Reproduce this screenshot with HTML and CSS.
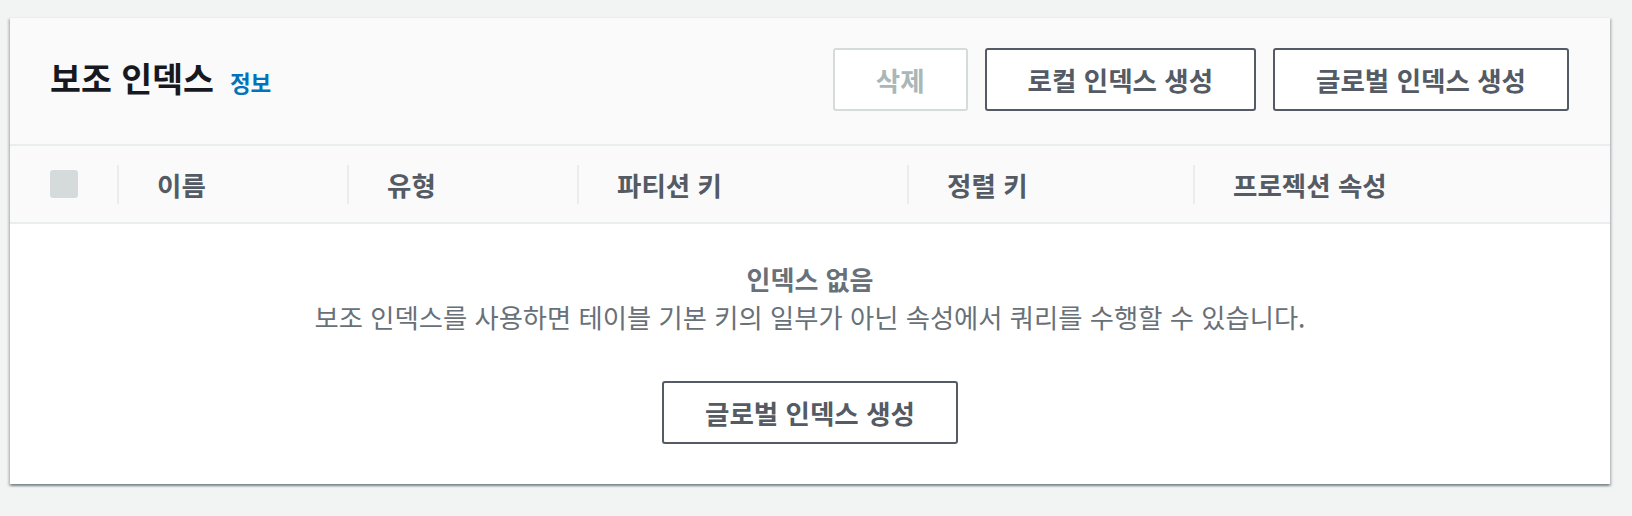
FILE: index.html
```html
<!DOCTYPE html>
<html lang="ko">
<head>
<meta charset="utf-8">
<title>보조 인덱스</title>
<link rel="stylesheet" href="styles.css">
</head>
<body>
<div class="page">
  <section class="card">
    <header class="card-header">
      <div class="title-group">
        <h2 class="title">보조 인덱스</h2>
        <a class="info" href="#">정보</a>
      </div>
      <div class="actions">
        <button class="btn btn-disabled" type="button">삭제</button>
        <button class="btn" type="button">로컬 인덱스 생성</button>
        <button class="btn" type="button">글로벌 인덱스 생성</button>
      </div>
    </header>
    <div class="table-head">
      <div class="th th-check"><span class="checkbox"></span></div>
      <div class="th"><span>이름</span></div>
      <div class="th"><span>유형</span></div>
      <div class="th"><span>파티션 키</span></div>
      <div class="th"><span>정렬 키</span></div>
      <div class="th"><span>프로젝션 속성</span></div>
    </div>
    <div class="empty">
      <div class="empty-title">인덱스 없음</div>
      <p class="empty-desc">보조 인덱스를 사용하면 테이블 기본 키의 일부가 아닌 속성에서 쿼리를 수행할 수 있습니다.</p>
      <button class="btn empty-btn" type="button">글로벌 인덱스 생성</button>
    </div>
  </section>
</div>
</body>
</html>
```

FILE: styles.css
```css
* {
  box-sizing: border-box;
}

html, body {
  margin: 0;
  padding: 0;
  background: #f2f3f3;
}

body {
  font-family: "Noto Sans CJK KR", "Noto Sans", sans-serif;
  color: #16191f;
}

.page {
  padding: 17px 22px 32px 10px;
  min-height: 100vh;
}

.card {
  background: #ffffff;
  box-shadow: 0 2px 2px 0 rgba(0, 28, 36, 0.3),
              2px 2px 2px 0 rgba(0, 28, 36, 0.15),
              -2px 2px 2px 0 rgba(0, 28, 36, 0.15);
  border-top: 1px solid #eaeded;
}

.card-header {
  height: 128px;
  background: #fafafa;
  border-bottom: 2px solid #eaeded;
  display: flex;
  align-items: center;
  justify-content: space-between;
  padding: 0 41px 3px 40px;
}

.title-group {
  display: flex;
  align-items: baseline;
  padding-bottom: 4px;
}

.title {
  margin: 0;
  font-size: 33.6px;
  font-weight: 700;
  line-height: 40px;
  color: #16191f;
}

.info {
  margin-left: 16px;
  font-size: 22.5px;
  font-weight: 700;
  color: #0073bb;
  text-decoration: none;
}

.actions {
  display: flex;
  gap: 17px;
}

.btn {
  height: 63px;
  padding: 0 41px;
  background: #ffffff;
  border: 2px solid #545b64;
  border-radius: 3px;
  font-family: "Noto Sans CJK KR", "Noto Sans", sans-serif;
  font-size: 26.5px;
  font-weight: 700;
  line-height: 59px;
  color: #545b64;
  cursor: pointer;
}

.btn-disabled {
  border-color: #d5dbdb;
  color: #aab7b8;
  cursor: default;
}

.table-head {
  display: grid;
  grid-template-columns: 107px 230px 230px 330px 286px 1fr;
  height: 78px;
  background: #fafafa;
  border-bottom: 2px solid #eaeded;
}

.th {
  display: flex;
  align-items: center;
  font-size: 26.5px;
  font-weight: 700;
  color: #545b64;
  line-height: 35px;
}

.th::before {
  content: "";
  width: 2px;
  height: 39px;
  background: #eaeded;
  margin-right: 38px;
  flex: none;
}

.th-check {
  padding-left: 40px;
}

.th-check::before {
  display: none;
}

.checkbox {
  width: 28px;
  height: 28px;
  border-radius: 3px;
  background: #d5dbdb;
}

.empty {
  display: flex;
  flex-direction: column;
  align-items: center;
  text-align: center;
  padding: 37px 0 40px;
  background: #ffffff;
}

.empty-title {
  font-size: 26px;
  font-weight: 700;
  line-height: 35px;
  color: #687078;
}

.empty-desc {
  margin: 3px 0 0;
  font-size: 26.3px;
  font-weight: 400;
  line-height: 35px;
  color: #687078;
}

.empty-btn {
  margin-top: 47px;
}
```
